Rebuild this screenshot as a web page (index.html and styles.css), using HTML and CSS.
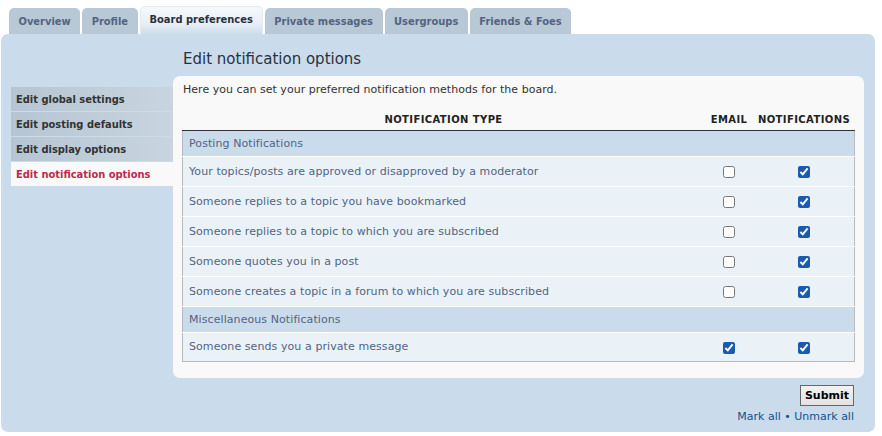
FILE: index.html
```html
<!DOCTYPE html>
<html>
<head>
<meta charset="utf-8">
<link rel="stylesheet" href="styles.css">
</head>
<body>
<div class="page">
  <ul class="tabs">
    <li class="tab">Overview</li>
    <li class="tab">Profile</li>
    <li class="tab active">Board preferences</li>
    <li class="tab">Private messages</li>
    <li class="tab">Usergroups</li>
    <li class="tab">Friends &amp; Foes</li>
  </ul>
  <div class="panel">
    <ul class="nav">
      <li class="nav-item">Edit global settings</li>
      <li class="nav-item">Edit posting defaults</li>
      <li class="nav-item">Edit display options</li>
      <li class="nav-item current">Edit notification options</li>
    </ul>
    <div class="main">
      <h2 class="title">Edit notification options</h2>
      <div class="content">
        <p class="intro">Here you can set your preferred notification methods for the board.</p>
        <table class="table">
          <thead>
            <tr>
              <th class="c-type">Notification type</th>
              <th class="c-email">Email</th>
              <th class="c-notif">Notifications</th>
            </tr>
          </thead>
          <tbody>
            <tr class="group"><td colspan="3">Posting Notifications</td></tr>
            <tr class="row"><td>Your topics/posts are approved or disapproved by a moderator</td><td class="cb"><input type="checkbox"></td><td class="cb"><input type="checkbox" checked></td></tr>
            <tr class="row"><td>Someone replies to a topic you have bookmarked</td><td class="cb"><input type="checkbox"></td><td class="cb"><input type="checkbox" checked></td></tr>
            <tr class="row"><td>Someone replies to a topic to which you are subscribed</td><td class="cb"><input type="checkbox"></td><td class="cb"><input type="checkbox" checked></td></tr>
            <tr class="row"><td>Someone quotes you in a post</td><td class="cb"><input type="checkbox"></td><td class="cb"><input type="checkbox" checked></td></tr>
            <tr class="row"><td>Someone creates a topic in a forum to which you are subscribed</td><td class="cb"><input type="checkbox"></td><td class="cb"><input type="checkbox" checked></td></tr>
            <tr class="group"><td colspan="3">Miscellaneous Notifications</td></tr>
            <tr class="row last"><td>Someone sends you a private message</td><td class="cb"><input type="checkbox" checked></td><td class="cb"><input type="checkbox" checked></td></tr>
          </tbody>
        </table>
      </div>
      <div class="actions">
        <button class="submit">Submit</button>
        <div class="marks"><a>Mark all</a> &bull; <a>Unmark all</a></div>
      </div>
    </div>
  </div>
</div>
</body>
</html>
```
FILE: styles.css
```css
* { box-sizing: border-box; }
html, body { margin: 0; padding: 0; background: #fff; }
body { font-family: "DejaVu Sans", Verdana, sans-serif; font-size: 11px; color: #333; }
.page { width: 882px; height: 436px; }
ul { list-style: none; margin: 0; padding: 0; }

.tabs { display: flex; align-items: flex-end; gap: 2px; padding: 0 0 0 9px; height: 34px; }
.tab {
  height: 26px; line-height: 27px; padding: 0 9.5px;
  background: #b8c8d6; color: #536482; font-weight: bold;
  font-family: "DejaVu Sans Condensed", "DejaVu Sans", sans-serif; font-size: 11px;
  border-radius: 5px 5px 0 0;
}
.tab.active {
  height: 29px; line-height: 26px; margin-bottom: -1px; padding: 0 9px;
  background: linear-gradient(#f6f9fc 0%, #e6eef5 60%, #cadceb 100%);
  color: #28313f; border: 1px solid #e3ebf2; border-bottom: none;
  position: relative; z-index: 1;
}

.panel {
  margin-left: 1px; width: 874px; height: 398px;
  background: #cadceb; border-radius: 7px;
  display: grid; grid-template-columns: 162px 1fr;
  padding: 0 11px 0 10px;
}
.nav { padding-top: 53px; }
.nav-item {
  height: 24px; line-height: 25px; margin-bottom: 1px; padding-left: 5px;
  font-weight: bold; color: #333;
  font-family: "DejaVu Sans Condensed", "DejaVu Sans", sans-serif; font-size: 11px;
  background: linear-gradient(to right, #b6c5d2, #c8d5e0);
}
.nav-item.current { background: #f9f9f9; color: #bc2a4d; }

.title {
  margin: 0; height: 42px; padding: 15px 0 0 10px;
  font-size: 15px; font-weight: normal; color: #28313f; line-height: 20px;
}
.content {
  background: #f9f9f9; border-radius: 7px; height: 302px;
  padding: 7px 9px 0 9px;
}
.intro { margin: 0 0 0 1px; line-height: 13px; color: #333; letter-spacing: 0.03px; }

.table { width: 673px; border-collapse: collapse; margin-top: 14px; }
.table th {
  font-size: 10px; font-weight: bold; text-transform: uppercase; color: #222;
  height: 20px; padding: 0 0 1px; letter-spacing: 0.4px;
  border-bottom: 1px solid #333;
}
.c-email { width: 49px; }
.c-notif { width: 101px; }
.table td { color: #536482; padding: 0 0 0 6px; letter-spacing: 0.08px; }
.group td { background: #cadceb; height: 26px; padding-top: 1px; border-bottom: 1px solid #fff; border-left: 1px solid #b4bac0; border-right: 1px solid #b4bac0; }
.row td { background: #eaf2f7; height: 30px; border-bottom: 1px solid #fff; }
.row td:first-child { border-left: 1px solid #b4bac0; }
.row td:last-child { border-right: 1px solid #b4bac0; }
.row.last td { border-bottom: 1px solid #b4bac0; height: 29px; }
.table td.cb { text-align: center; padding: 0; }
.cb input {
  width: 12px; height: 12px; margin: 2px 0 0; vertical-align: middle;
  accent-color: #1a5bb0;
}
.cb:last-child input { margin-left: 1px; }

.actions { display: flex; flex-direction: column; align-items: flex-end; padding: 7px 10px 0 0; }
.submit {
  font-family: "DejaVu Sans", Verdana, sans-serif; font-size: 11px; font-weight: bold; color: #000;
  width: 54px; height: 21px; padding: 0;
  background: linear-gradient(#f2f2f2, #e2e2e2); border: 1px solid #666; border-radius: 0;
}
.marks { margin-top: 4px; color: #105289; line-height: 14px; }
.marks a { color: #105289; }
```
